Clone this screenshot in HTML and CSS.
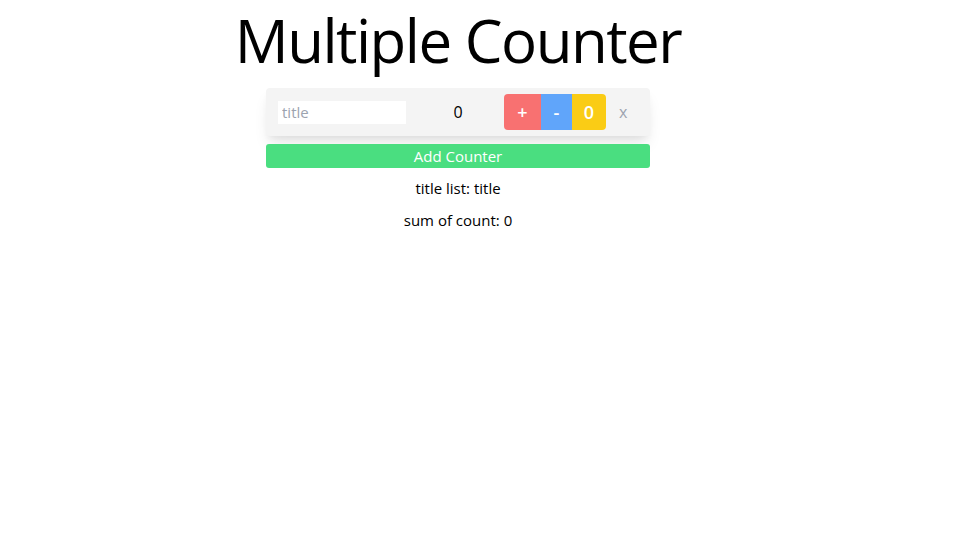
FILE: index.html
```html
<!DOCTYPE html>
<html lang="en">
<head>
<meta charset="utf-8">
<title>Multiple Counter</title>
<link rel="stylesheet" href="styles.css">
</head>
<body>
<div class="app">
  <h1 class="title">Multiple Counter</h1>
  <div class="counters">
    <div class="counter">
      <input class="counter-title" type="text" placeholder="title">
      <span class="count">0</span>
      <div class="btn-group">
        <button class="btn btn-inc">+</button>
        <button class="btn btn-dec">-</button>
        <button class="btn btn-reset">0</button>
      </div>
      <button class="remove">x</button>
    </div>
  </div>
  <button class="add">Add Counter</button>
  <p class="info">title list: title</p>
  <p class="info">sum of count: 0</p>
</div>
</body>
</html>
```
FILE: styles.css
```css
* { box-sizing: border-box; }
body {
  margin: 0;
  font-family: "Open Sans", "Noto Sans", sans-serif;
  color: #000;
  background: #fff;
}
.app {
  width: 916px;
  display: flex;
  flex-direction: column;
  align-items: center;
}
.title {
  margin: 0;
  font-size: 60px;
  font-weight: 400;
  line-height: 80px;
  letter-spacing: -1.5px;
}
.counters {
  margin-top: 8px;
  width: 384px;
}
.counter {
  display: flex;
  align-items: center;
  height: 48px;
  padding: 6px 0 6px 12px;
  background: #f4f4f4;
  border-radius: 4px;
  box-shadow: 0 10px 15px -3px rgba(0,0,0,0.1), 0 4px 6px -2px rgba(0,0,0,0.05);
}
.counter-title {
  width: 128px;
  height: 23px;
  border: none;
  outline: none;
  padding: 0 4px;
  font: inherit;
  font-size: 15px;
  background: #fff;
}
.counter-title::placeholder { color: #9ca3af; }
.count {
  width: 98px;
  text-align: center;
  font-size: 16px;
  font-weight: 500;
  padding-left: 6px;
}
.btn-group {
  display: flex;
  height: 36px;
  border-radius: 4px;
  overflow: hidden;
}
.btn {
  border: none;
  padding: 0;
  text-align: center;
  color: #fff;
  font: inherit;
  font-size: 18px;
  font-weight: 600;
  line-height: 36px;
}
.btn-inc { background: #f87171; width: 37px; }
.btn-dec { background: #60a5fa; width: 31px; }
.btn-reset { background: #facc15; width: 34px; }
.remove {
  border: none;
  background: none;
  color: #9ca3af;
  font: inherit;
  font-size: 16px;
  margin-left: 11px;
  padding: 0 2px;
}
.add {
  margin-top: 8px;
  width: 384px;
  height: 24px;
  border: none;
  border-radius: 3px;
  background: #4ade80;
  color: #fff;
  font: inherit;
  font-size: 15px;
  line-height: 24px;
  padding: 0;
}
.info {
  margin: 8px 0 0;
  font-size: 15px;
  line-height: 24px;
}
```
